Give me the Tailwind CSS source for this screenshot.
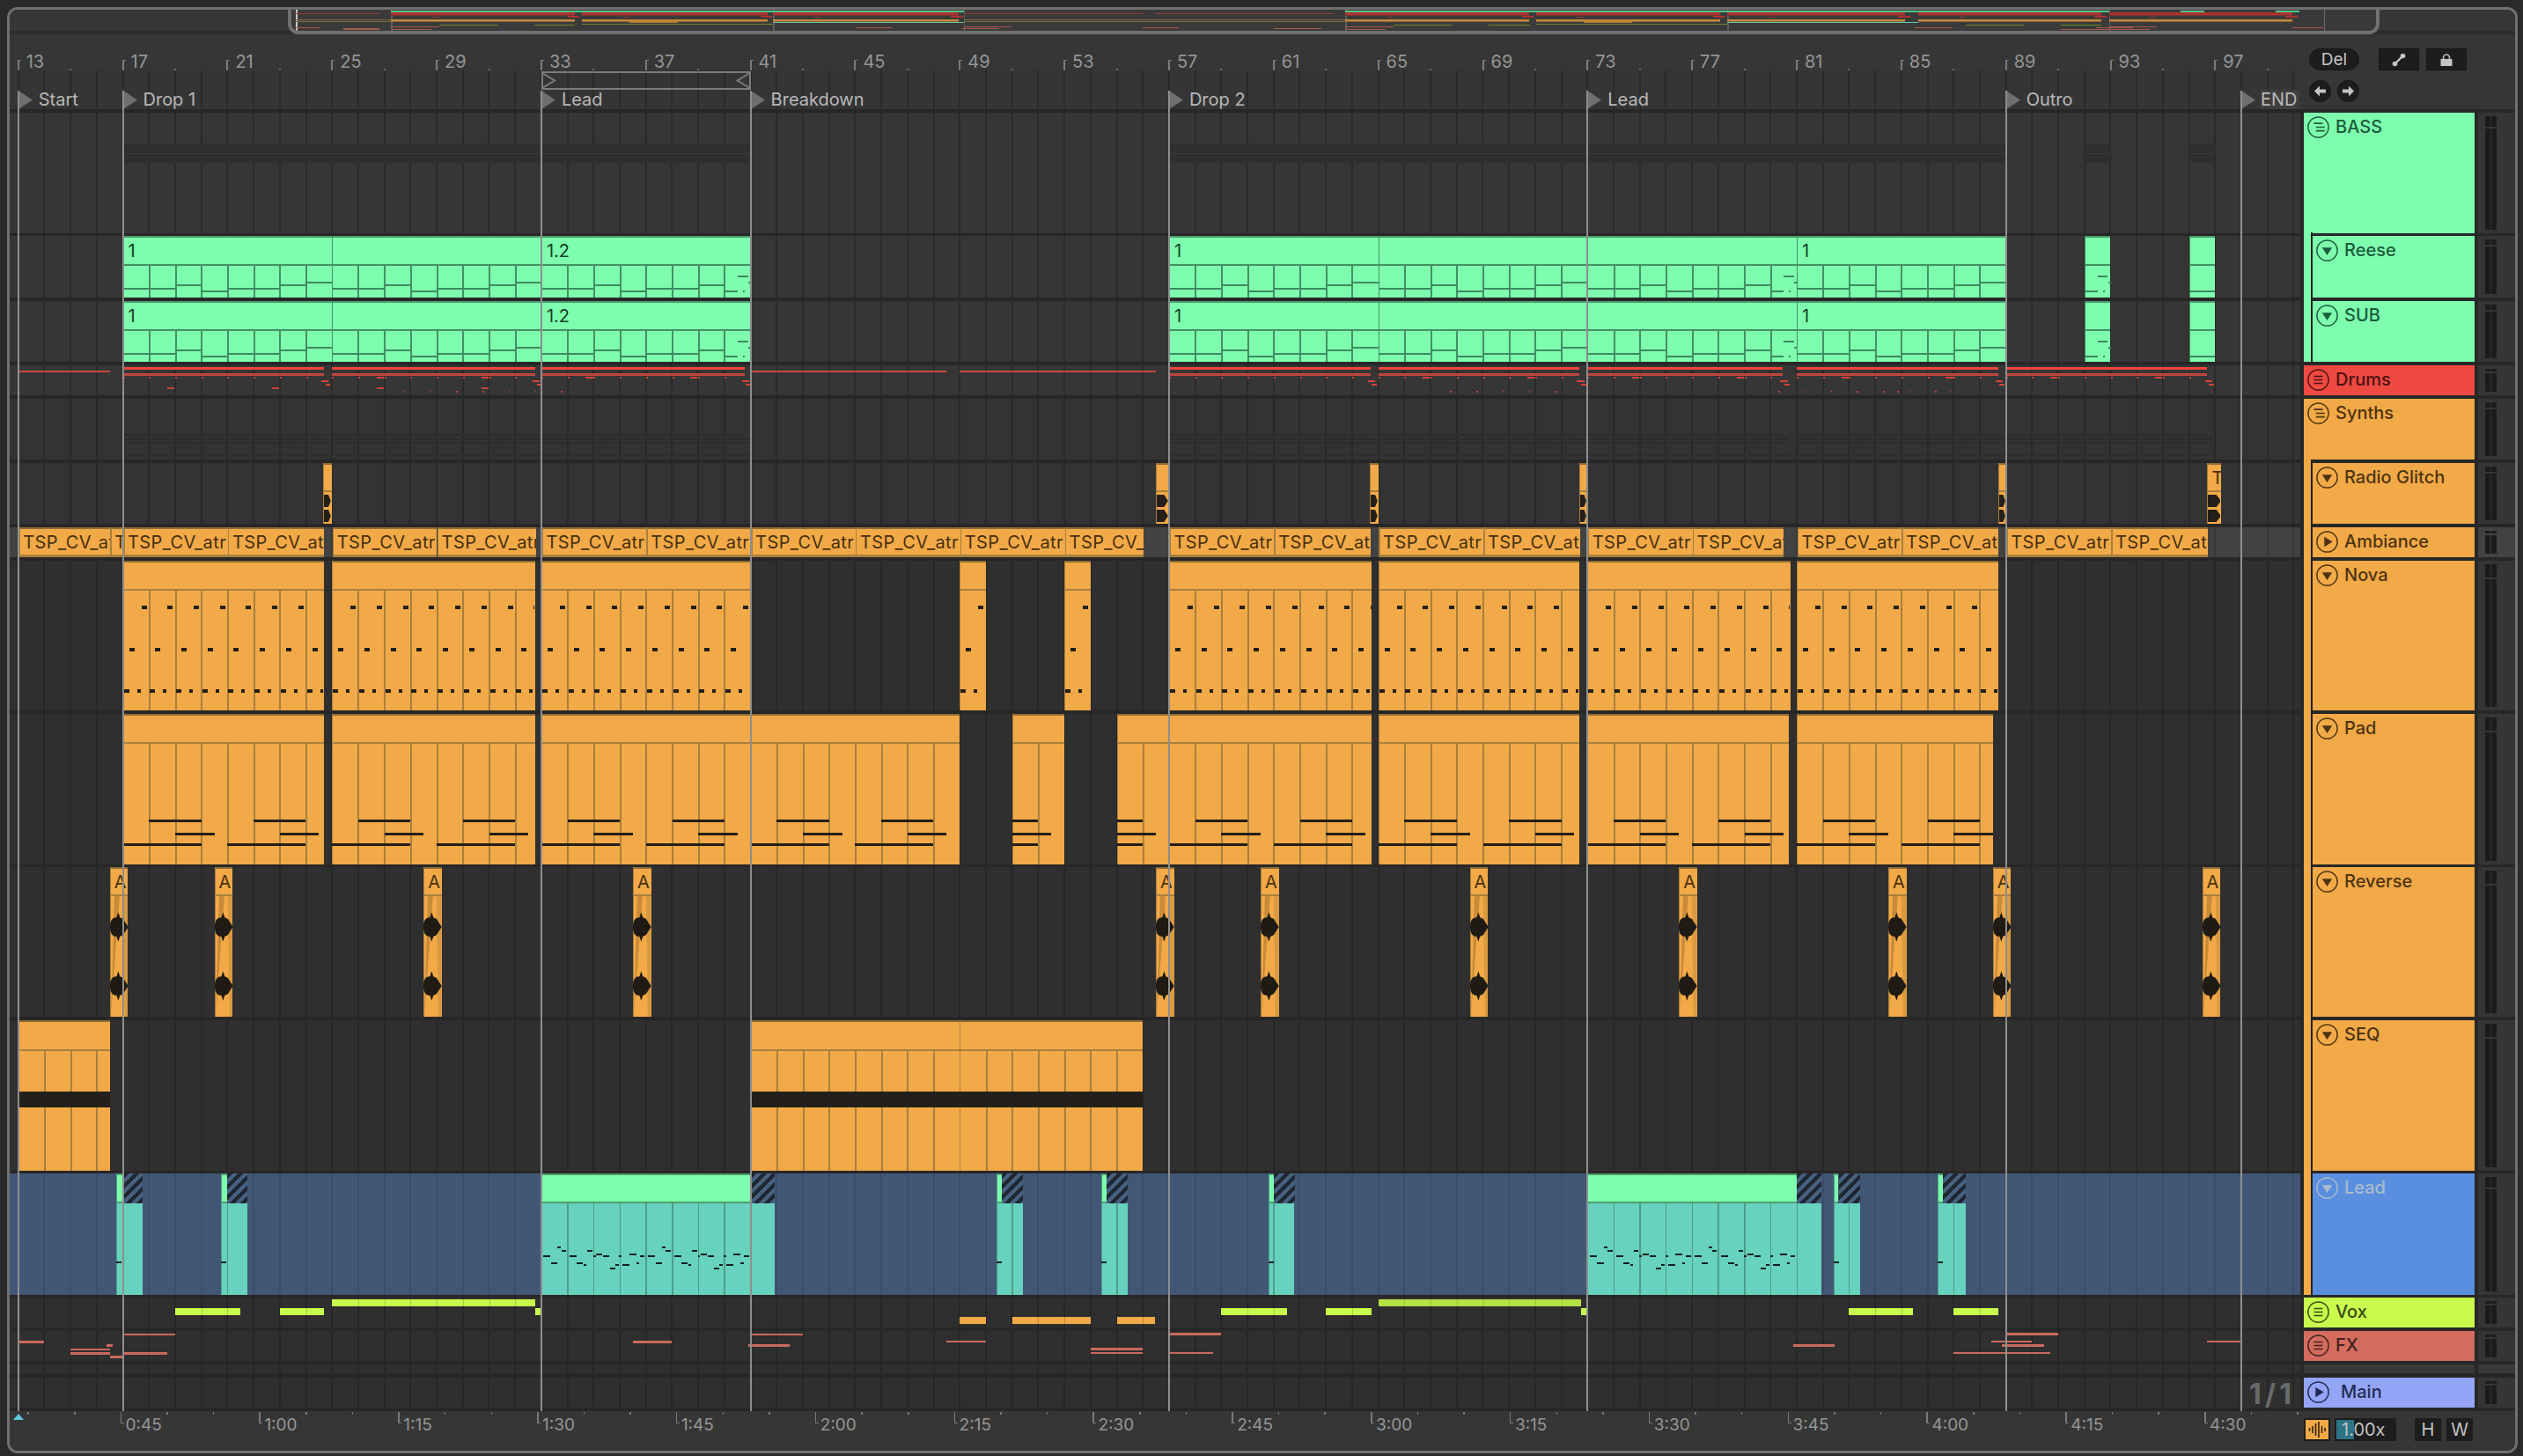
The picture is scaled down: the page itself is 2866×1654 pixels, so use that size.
<!DOCTYPE html>
<html lang="en">
<head>
<meta charset="utf-8">
<title>Arrangement</title>
<script src="https://cdn.jsdelivr.net/npm/@tailwindcss/browser@4"></script>
</head>
<body class="bg-[#2a2a2a] overflow-hidden">
<div class="w-[2866px] h-[1654px] pl-[8px] pr-[6px] pt-[8px] pb-[3px]">
  <div id="frame" class="relative w-full h-full border-[3px] border-[#707070] rounded-[12px] bg-[#272727] overflow-hidden flex flex-col [font-family:Inter,sans-serif]">

    <!-- overview strip -->
    <div class="relative h-[28px] shrink-0 bg-[#363636] border-b-4 border-[#2d2d2d]"></div>
    <div id="overview" class="absolute left-[316px] top-0 w-[2376px] h-[28px] z-10 bg-[#3a3a3a] border-x-4 border-b-4 border-[#707070] rounded-b-[12px] overflow-hidden"></div>

    <!-- rulers and locators -->
    <div class="flex h-[85px] shrink-0 bg-[#363636]">
      <div class="w-[2602px] flex flex-col">
        <div id="bars" class="relative h-[41px]"></div>
        <div id="locators" class="relative h-[44px] bg-[#353535] bg-[repeating-linear-gradient(90deg,transparent_0,transparent_8.7px,#2a2a2a_8.7px,#2a2a2a_10.7px,transparent_10.7px,transparent_29.71px)]"></div>
      </div>
      <div class="w-[4px]"></div>
      <div class="flex-1 pl-[6px] pt-[16px] text-[#c4c4c4]">
        <div class="flex items-center h-[25px]">
          <div class="w-[57px] h-[25px] rounded-full bg-[#1d1d1d] border border-[#161616] flex items-center justify-center text-[19px] leading-none">Del</div>
          <div class="ml-[22px] w-[46px] h-[25px] bg-[#1d1d1d] border border-[#161616] flex items-center justify-center">
            <svg class="w-[16px] h-[16px]" viewBox="0 0 16 16"><path d="M3.5 12.5 L12.5 3.5" stroke="#c4c4c4" stroke-width="2.4"/><circle cx="3.5" cy="12.5" r="2.8" fill="#c4c4c4"/><circle cx="12.5" cy="3.5" r="2.8" fill="#c4c4c4"/></svg>
          </div>
          <div class="ml-[8px] w-[46px] h-[25px] bg-[#1d1d1d] border border-[#161616] flex items-center justify-center">
            <svg class="w-[16px] h-[16px]" viewBox="0 0 16 16"><path d="M4.5 7.5 V5.5 a3.5 3.5 0 0 1 7 0 V7.5" fill="none" stroke="#c4c4c4" stroke-width="1.6"/><rect x="1.5" y="7" width="13" height="8" fill="#c4c4c4"/></svg>
          </div>
        </div>
        <div class="flex mt-[11px] gap-[7px]">
          <div class="w-[25px] h-[25px] rounded-full bg-[#1d1d1d] border border-[#161616] flex items-center justify-center">
            <svg class="w-[15px] h-[13px]" viewBox="0 0 15 13"><path d="M7 0.5 L1 6.5 L7 12.5 L7 8.5 L14 8.5 L14 4.5 L7 4.5 Z" fill="#c4c4c4"/></svg>
          </div>
          <div class="w-[25px] h-[25px] rounded-full bg-[#1d1d1d] border border-[#161616] flex items-center justify-center">
            <svg class="w-[15px] h-[13px]" viewBox="0 0 15 13"><path d="M8 0.5 L14 6.5 L8 12.5 L8 8.5 L1 8.5 L1 4.5 L8 4.5 Z" fill="#c4c4c4"/></svg>
          </div>
        </div>
      </div>
    </div>

    <!-- tracks -->
    <div id="rows" class="flex flex-col shrink-0"></div>

    <!-- time ruler and bottom controls -->
    <div class="mt-[4px] flex-1 flex bg-[#363636]">
      <div id="times" class="relative w-[2602px] h-full"></div>
      <div class="w-[4px]"></div>
      <div class="flex-1 flex items-start pt-[8px] text-[#c4c4c4]">
        <div class="w-[30px] h-[26px] bg-[#f2a947] border-2 border-[#1d1d1d] flex items-center justify-center">
          <svg class="w-[20px] h-[18px]" viewBox="0 0 20 18"><path d="M1.5 7v4M5 5v8M8.5 2v14M12 0v18M15.5 5v8M19 7v4" stroke="#33230b" stroke-width="1.6"/></svg>
        </div>
        <div class="relative ml-[5px] w-[70px] h-[26px] bg-[#1d1d1d] flex items-center pl-[8px] text-[20px] leading-none">
          <div class="absolute left-[2px] top-[2px] bottom-[2px] w-[20px] bg-[#2c7486]"></div>
          <span class="relative">1.00x</span>
        </div>
        <div class="ml-[21px] w-[30px] h-[26px] bg-[#1d1d1d] flex items-center justify-center text-[20px] leading-none">H</div>
        <div class="ml-[6px] w-[30px] h-[26px] bg-[#1d1d1d] flex items-center justify-center text-[20px] leading-none">W</div>
      </div>
    </div>

    <div id="sections" class="absolute inset-0 pointer-events-none"></div>
  </div>
</div>

<script>
const X = b => 9.7 + 29.71 * (b - 13);
const OX = b => 336 + 27.1 * (b - 13) - 331;
const box = (l, t, w, h, cls, inner = '') =>
  `<div class="absolute ${cls}" style="left:${l.toFixed(1)}px;top:${t.toFixed(1)}px;width:${w.toFixed(1)}px;height:${h}px">${inner}</div>`;

const LIGHT = 'bg-[#363636] bg-[repeating-linear-gradient(90deg,transparent_0,transparent_8.7px,#2a2a2a_8.7px,#2a2a2a_10.7px,transparent_10.7px,transparent_29.71px)]';
const MID = 'bg-[#333333] bg-[repeating-linear-gradient(90deg,transparent_0,transparent_8.7px,#282828_8.7px,#282828_10.7px,transparent_10.7px,transparent_29.71px)]';
const DARK = 'bg-[#2f2f2f] bg-[repeating-linear-gradient(90deg,transparent_0,transparent_8.7px,#262626_8.7px,#262626_10.7px,transparent_10.7px,transparent_29.71px)]';
const BLUE = 'bg-[#415775] bg-[repeating-linear-gradient(90deg,transparent_0,transparent_8.7px,#3a4e6b_8.7px,#3a4e6b_10.7px,transparent_10.7px,transparent_29.71px)]';
const SEL = 'bg-[#424242] bg-[repeating-linear-gradient(90deg,transparent_0,transparent_8.7px,#383838_8.7px,#383838_10.7px,transparent_10.7px,transparent_29.71px)]';

const C = {
  green: { bg: 'bg-[#7dfdad]', text: 'text-[#1c5c3c]', strip: 'bg-[#7dfdad]' },
  red: { bg: 'bg-[#ee4a42]', text: 'text-[#4d1210]' },
  orange: { bg: 'bg-[#f2a947]', text: 'text-[#4d3410]', strip: 'bg-[#f2a947]' },
  blue: { bg: 'bg-[#5a8fe0]', text: 'text-[#a9bccb]' },
  lime: { bg: 'bg-[#c8fb4d]', text: 'text-[#3a4a10]' },
  salmon: { bg: 'bg-[#d36c5e]', text: 'text-[#43201b]' },
  main: { bg: 'bg-[#94a5f7]', text: 'text-[#222b52]' }
};

const defs = [
  { id: 'bass', name: 'BASS', h: 137, mt: 4, grid: LIGHT, c: C.green, icon: 'group', meter: LIGHT },
  { id: 'reese', name: 'Reese', h: 70, mt: 3, grid: LIGHT, c: C.green, icon: 'down', parent: C.green },
  { id: 'sub', name: 'SUB', h: 69, mt: 4, grid: LIGHT, c: C.green, icon: 'down', parent: C.green },
  { id: 'drums', name: 'Drums', h: 34, mt: 4, grid: LIGHT, c: C.red, icon: 'list' },
  { id: 'synths', name: 'Synths', h: 69, mt: 4, grid: MID, c: C.orange, icon: 'group' },
  { id: 'radio', name: 'Radio Glitch', h: 69, mt: 4, grid: MID, c: C.orange, icon: 'down', parent: C.orange },
  { id: 'amb', name: 'Ambiance', h: 34, mt: 4, grid: SEL, c: C.orange, icon: 'right', parent: C.orange },
  { id: 'nova', name: 'Nova', h: 170, mt: 4, grid: DARK, c: C.orange, icon: 'down', parent: C.orange },
  { id: 'pad', name: 'Pad', h: 171, mt: 4, grid: DARK, c: C.orange, icon: 'down', parent: C.orange },
  { id: 'rev', name: 'Reverse', h: 170, mt: 3, grid: DARK, c: C.orange, icon: 'down', parent: C.orange },
  { id: 'seq', name: 'SEQ', h: 171, mt: 4, grid: DARK, c: C.orange, icon: 'down', parent: C.orange },
  { id: 'lead', name: 'Lead', h: 138, mt: 3, grid: BLUE, c: C.blue, icon: 'down', parent: C.orange },
  { id: 'vox', name: 'Vox', h: 34, mt: 3, grid: DARK, c: C.lime, icon: 'list' },
  { id: 'fx', name: 'FX', h: 34, mt: 4, grid: DARK, c: C.salmon, icon: 'list' },
  { id: 'ret', name: '', h: 10, mt: 4, grid: DARK, c: null },
  { id: 'main', name: 'Main', h: 34, mt: 5, grid: DARK, c: C.main, icon: 'right' }
];
const R = {};
let yy = 124;
for (const d of defs) { yy += d.mt; d.top = yy; d.html = ''; R[d.id] = d; yy += d.h; }

const rect = (id, x0, x1, y, h, cls, inner = '') => { R[id].html += box(x0, y - R[id].top, x1 - x0, h, cls, inner); };
const bars = (id, b0, b1, y, h, cls) => rect(id, X(b0), X(b1), y, h, cls);

function icon(type) {
  const glyph = {
    group: '<path d="M7.5 8.2H17.5M9.8 12.5H19.8M9.8 16.6H19.8" stroke="currentColor" stroke-width="1.7" fill="none"/>',
    list: '<path d="M7.5 8.5H17.5M7.5 12.5H17.5M7.5 16.5H17.5" stroke="currentColor" stroke-width="1.7" fill="none"/>',
    down: '<polygon points="6.8,9.3 18.2,9.3 12.5,18" fill="currentColor"/>',
    right: '<polygon points="9.3,6.8 18.7,12.5 9.3,18.2" fill="currentColor"/>'
  }[type];
  return `<svg class="w-[25px] h-[25px] shrink-0" viewBox="0 0 25 25"><circle cx="12.5" cy="12.5" r="11.6" fill="none" stroke="currentColor" stroke-width="1.5"/>${glyph}</svg>`;
}

/* generic clip: title bar, bar lines in the body, optional label */
const ORANGE = { bg: 'bg-[#f2a947]', strip: 'bg-[#8f6c36]', line: 'bg-[#a97f3e]', text: 'text-[#47300f]' };
const GREEN = { bg: 'bg-[#7dfdad]', strip: 'bg-[#4d9d6d]', line: 'bg-[#459064]', text: 'text-[#163f2a]' };
function clip(id, b0, b1, t, o = {}) {
  const r = R[id], th = o.th ?? 32, x0 = X(b0), x1 = X(b1);
  rect(id, x0, x1, r.top, r.h, t.bg);
  rect(id, x0, x1, r.top, 2, t.strip);
  if (th < r.h) rect(id, x0, x1, r.top + th, 2, t.line);
  rect(id, x0, x0 + 1, r.top, r.h, t.line);
  if (!o.nolines) for (let b = Math.ceil(b0 + 0.01); b < b1 - 0.01; b++) rect(id, X(b) - 0.5, X(b) + 1.5, r.top + th, r.h - th, t.line);
  if (o.label) rect(id, x0 + (o.lx ?? 5), x1, r.top + 1, Math.min(th, r.h) - 1,
    `overflow-hidden whitespace-nowrap text-[20px] leading-[32px] ${t.text}`, o.label);
}

/* ===== Bass group ===== */
[[17, 41], [57, 89], [92, 93], [96, 97]].forEach(([a, b]) => {
  bars('bass', a, b, 163, 22, 'bg-[#2f2f2f]');
  bars('bass', a, b, 174, 1, 'bg-[#3a3a3a]');
});
const bassPat = [60, 60, 56, 63, 60, 60, 56, 53];
for (const id of ['reese', 'sub']) {
  const top = R[id].top;
  const segs = [[17, 25, '1'], [25, 33, ''], [33, 41, '1.2'], [57, 65, '1'], [65, 73, ''], [73, 81, ''], [81, 89, '1'], [92, 93, ''], [96, 97, '']];
  for (const [a, b, label] of segs) {
    clip(id, a, b, GREEN, { label, lx: 6 });
    for (let k = a; k < b; k++) {
      const v = (a === 33 || a === 73) && k === b - 1;
      if (v || a === 92) {
        bars(id, k + 0.5, k + 0.9, top + 45, 1.5, 'bg-[#3b8a60]');
        bars(id, k + 0.9, k + 1, top + 52, 2, 'bg-[#3b8a60]');
        bars(id, k, k + 0.5, top + 62, 2, 'bg-[#3b8a60]');
        bars(id, k + 0.7, k + 0.78, top + 62, 2, 'bg-[#3b8a60]');
      } else if (a === 96) {
        bars(id, k, k + 1, top + 62, 2, 'bg-[#3b8a60]');
      } else {
        bars(id, k, k + 1, top + bassPat[(k - a) % 8] - 1, 2, 'bg-[#3b8a60]');
      }
    }
  }
}

/* ===== Drums ===== */
const secs = [[17, 24.69], [25, 32.77], [33, 40.77], [57, 64.7], [65, 72.7], [73, 80.47], [81, 88.7], [89, 96.7]];
secs.forEach(([s, e]) => {
  bars('drums', s, e, 416.5, 3, 'bg-[#ec453b]');
  bars('drums', s, e, 424, 3, 'bg-[#bd4740]');
  for (let i = 0; i < 8; i++) bars('drums', s + i, s + i + 0.07, 428, 2, 'bg-[#d5433a]');
  if (s !== 17 && s !== 57) {
    bars('drums', s + 1.7, s + 1.98, 428, 2, 'bg-[#d5433a]');
    bars('drums', s + 5.7, s + 5.98, 428, 2, 'bg-[#d5433a]');
  }
  bars('drums', e - 0.1, e + 0.18, 432, 2, 'bg-[#d5433a]');
  bars('drums', e + 0.05, e + 0.25, 436, 2, 'bg-[#d5433a]');
});
[[13, 16.5], [41, 48.5], [49, 56.5]].forEach(([a, b]) => bars('drums', a, b, 420.5, 2.5, 'bg-[#c9463e]'));
[18.7, 22.7, 26.7, 30.7].forEach(b => bars('drums', b, b + 0.28, 439.5, 2, 'bg-[#c4453d]'));
[27.75, 28.75, 29.75, 30.75, 31.75, 32.75, 33.75, 67.75, 68.75, 69.75, 70.75, 71.75, 80.3, 81.3, 82.3, 83.3, 84.3, 84.85, 85.3, 86.3, 86.85, 96.85].forEach(b =>
  bars('drums', b, b + 0.05, 443.5, 2, 'bg-[#c4453d]'));

/* ===== Synths (collapsed group, faint) ===== */
secs.forEach(([s, e]) => {
  bars('synths', s, e, 493, 2, 'bg-[#2c2c2c]');
  bars('synths', s, e + 0.2, 498, 2, 'bg-[#2c2c2c]');
  bars('synths', s, e + 0.2, 502, 2, 'bg-[#2c2c2c]');
  bars('synths', s + 2, s + 2.7, 507, 2, 'bg-[#2d2d2d]');
  bars('synths', s + 6, s + 6.7, 507, 2, 'bg-[#2d2d2d]');
  bars('synths', s, e + 0.3, 516, 2, 'bg-[#2e2e2e]');
});

/* ===== Radio Glitch ===== */
[[24.67, 25, ''], [56.5, 57, ''], [64.67, 65, ''], [72.7, 73, ''], [88.7, 89, ''], [96.67, 97.24, 'T']].forEach(([a, b, l]) => {
  clip('radio', a, b, ORANGE, { label: l, lx: 6, th: 31, nolines: true });
  const w = X(b) - X(a) - 2;
  const svg = () => `<svg class="w-full h-full" preserveAspectRatio="none" viewBox="0 0 20 14"><polygon points="0,0 13,0 20,7 13,14 0,14" fill="#241f18"/></svg>`;
  rect('radio', X(a) + 1, X(a) + 1 + w, 562, 14, '', svg());
  rect('radio', X(a) + 1, X(a) + 1 + w, 579, 14, '', svg());
});

/* ===== Ambiance ===== */
[[13, 16.5], [16.5, 17], [17, 21], [21, 24.69], [25, 29], [29, 32.77], [33, 37], [37, 41],
 [41, 45], [45, 49], [49, 53], [53, 56], [57, 61], [61, 64.7], [65, 69], [69, 72.7],
 [73, 77], [77, 80.47], [81, 85], [85, 88.7], [89, 93], [93, 96.7]].forEach(([a, b]) => {
  const r = R.amb, x0 = X(a) + 0.5, x1 = X(b) + 0.5;
  rect('amb', x0, x1, r.top, r.h, 'bg-[#f2a947]');
  rect('amb', x0, x1, r.top, 2, 'bg-[#8f6c36]');
  rect('amb', x0, x1, r.top + 31, 3, 'bg-[#a97f3e]');
  rect('amb', x0, x0 + 1.5, r.top, r.h, 'bg-[#a97f3e]');
  rect('amb', x0 + 5, x1, r.top + 1, 31, 'overflow-hidden whitespace-nowrap text-[20px] tracking-[0.4px] leading-[32px] text-[#47300f]', 'TSP_CV_atr');
});

/* ===== Nova ===== */
[[17, 24.69], [25, 32.77], [33, 41], [49, 50], [53, 54], [57, 64.75], [65, 72.7], [73, 80.75], [81, 88.7]].forEach(([a, b]) => {
  clip('nova', a, b, ORANGE);
  const pad = (x0, w, y) => {
    const l = Math.max(x0, X(a)), r = Math.min(x0 + w, X(b) - 1);
    if (r > l) rect('nova', l, r, y, 4, 'bg-[#231f1a]');
  };
  for (let k = Math.floor(a); k < b; k++) {
    pad(X(k) + 21, 6, 688);
    pad(X(k) + 7, 6, 736);
    pad(X(k) + 1, 6, 783);
    pad(X(k) + 16, 4, 783);
  }
});

/* ===== Pad ===== */
[[17, 24.69], [25, 32.77], [33, 49], [51, 53], [55, 64.75], [65, 72.7], [73, 80.7], [81, 88.5]].forEach(([a, b]) => {
  clip('pad', a, b, ORANGE);
  const n = (p, q, y) => { const l = Math.max(p, a), r = Math.min(q, b); if (r > l) bars('pad', l, r, y, 3, 'bg-[#231f1a]'); };
  for (let k = 1; k < 97; k += 4) {
    n(k + 1, k + 3, 930.5);
    n(k + 2, k + 3.5, 945.5);
    n(k, k + 3, 957.5);
  }
});

/* ===== Reverse ===== */
const blob1 = '<path d="M0 17 C0 9 3 6 7.5 6 L9.5 0 L11.5 6 L15 7.5 L21 17 L15 26.5 L11.5 28 L9.5 34 L7.5 28 C3 28 0 25 0 17Z" fill="#1f1a14"/>';
[16.5, 20.5, 28.5, 36.5, 56.5, 60.5, 68.5, 76.5, 84.5, 88.5, 96.5].forEach(b => {
  const x0 = X(b), x1 = x0 + 20.7;
  clip('rev', b, b + 0.697, ORANGE, { label: 'A', lx: 5, th: 31, nolines: true });
  const t = R.rev.top;
  rect('rev', x0 + 1, x1, t + 33, 137, '', `<svg class="w-full h-full" preserveAspectRatio="none" viewBox="0 0 20 137"><polygon points="10,0 4,0 0,137" fill="#c98b3a"/><polygon points="14,0 20,0 20,137 16,137" fill="#d99a40"/></svg>`);
  rect('rev', x0, x1, 1036, 34, '', `<svg class="w-full h-full" viewBox="0 0 21 34">${blob1}</svg>`);
  rect('rev', x0, x1, 1103, 34, '', `<svg class="w-full h-full" viewBox="0 0 21 34">${blob1}</svg>`);
});

/* ===== SEQ ===== */
[[13, 16.5], [41, 49], [49, 56]].forEach(([a, b]) => {
  clip('seq', a, b, ORANGE, { th: 33 });
  bars('seq', a, b, 1240, 18, 'bg-[#231f1a]');
});

/* ===== Lead ===== */
const HATCH = 'bg-[repeating-linear-gradient(135deg,#1f2733_0,#1f2733_4.3px,#47607f_4.3px,#47607f_8.5px)]';
const base = [[172,317,25],[220,287,12],[233,299,17],[198,341,22],[262,317,24],[286,341,22],[310,347,10],[322,299,17],[342,317,8],[352,311,22],[376,317,22],[398,359,18],[416,347,12],[430,317,10],[440,347,24],[464,311,24],[488,341,10],[500,317,17]];
[[16.75, 17, 17.77], [20.75, 21, 21.77], [33, 41, 41.93], [50.4, 50.6, 51.43], [54.4, 54.6, 55.43], [60.8, 61, 61.8], [73, 81, 81.95], [82.4, 82.6, 83.43], [86.4, 86.6, 87.45]].forEach(([a, g, e]) => {
  const t = R.lead.top, x0 = X(a), gx = X(g), x1 = X(e);
  rect('lead', x0, x1, t + 34, 104, 'bg-[#67d2bd]');
  rect('lead', x0, gx, t, 33, 'bg-[#7dfdad]');
  rect('lead', x0, gx, t, 2, 'bg-[#4d9d6d]');
  rect('lead', x0, gx, t + 32, 2, 'bg-[#4d9d6d]');
  rect('lead', gx, x1, t, 34, HATCH);
  rect('lead', x0, x0 + 1, t, 138, 'bg-[#4f9c8d]');
  for (let b = Math.ceil(a + 0.01); b < e - 0.01; b++) rect('lead', X(b) - 0.5, X(b) + 1, t + 34, 104, 'bg-[#4f9c8d]');
  if (e - a > 2) {
    for (const off of [0, 118.84]) for (const [nx, ny, nw] of base)
      rect('lead', x0 + off + (nx - 165) / 3, x0 + off + (nx - 165) / 3 + nw / 3, ny / 3 + 1320, 2, 'bg-[#14211f]');
  } else {
    rect('lead', x0, x0 + 6, 1433, 2, 'bg-[#14211f]');
  }
});

/* ===== Vox ===== */
const lime = (a, b, y, cls, div) => {
  bars('vox', a, b, y, 8, cls);
  for (let k = Math.ceil(a + 0.01); k < b; k++) bars('vox', k, k + 0.03, y, 8, div);
};
[[19, 21.5], [23, 24.7], [32.77, 33], [59, 61.5], [63, 64.75], [72.75, 73], [83, 85.45], [87, 88.7]].forEach(([a, b]) => lime(a, b, 1486, 'bg-[#c8fb4d]', 'bg-[#a5cf40]'));
[[25, 32.78]].forEach(([a, b]) => lime(a, b, 1476, 'bg-[#c8fb4d]', 'bg-[#a5cf40]'));
[[65, 72.75]].forEach(([a, b]) => lime(a, b, 1476, 'bg-[#b5e244]', 'bg-[#9cc23c]'));
[[49, 50], [51, 54], [55, 56.45]].forEach(([a, b]) => lime(a, b, 1496, 'bg-[#f2a947]', 'bg-[#c58a3c]'));

/* ===== FX ===== */
[[13, 14, 1523], [15, 16.5, 1531.5], [15, 16.5, 1536], [16.36, 16.6, 1527], [16.5, 17, 1540], [17, 19, 1514.5], [17, 18.7, 1536], [36.5, 38, 1523], [41, 43, 1514.5], [40.9, 42.5, 1527],
 [48.5, 50, 1522.5], [54, 56, 1531], [54, 56, 1535.5], [57, 59, 1514], [57, 58.7, 1535.5], [80.85, 82.45, 1527], [89, 91, 1514], [88.45, 90, 1522.5], [88.85, 90.45, 1527], [87, 90.7, 1535.5], [96.7, 98, 1522.5]]
  .forEach(([a, b, y]) => bars('fx', a, b, y, 2.5, 'bg-[#c96a5c]'));

/* ===== Main: view counter ===== */
R.main.html += '<div class="absolute right-[6px] top-[1px] text-[32px] leading-[36px] font-bold tracking-[4px] text-[#6a6a6a]">1/1</div>';

/* ===== Row markup ===== */
function header(d) {
  if (!d.c) return '<div class="w-[194px] h-full bg-[#393939]"></div>';
  const gap = d.id === 'main' ? 'gap-[13px]' : 'gap-[7px]';
  const inner = `<div class="flex-1 min-w-0 h-full ${d.c.bg} ${d.c.text} flex items-start pt-[4px] pl-[4px] ${gap} relative">${icon(d.icon)}<span class="text-[20px] leading-[25px] font-medium whitespace-nowrap">${d.name}</span></div>`;
  if (!d.parent) return `<div class="w-[194px] h-full flex">${inner}</div>`;
  return `<div class="relative w-[194px] h-full flex pl-[10px]">
    <div class="absolute left-0 w-[8px] -top-[4px] bottom-0 ${d.parent.bg}"></div>
    <div class="absolute left-[8px] w-[2px] -top-[4px] bottom-0 bg-[#222222]"></div>${inner}</div>`;
}
function meter(d) {
  const sel = d.id === 'amb' ? 'bg-[#424242]' : 'bg-[#353535]';
  const tp = Math.max(2, Math.round(d.h * 0.09));
  if (d.id === 'ret') return `<div class="flex-1 h-full bg-[#393939]"></div>`;
  const bar = `<div class="w-[6px] h-full flex flex-col gap-[2px]"><div class="bg-[#1b1b1b] shrink-0" style="height:${tp}px"></div><div class="bg-[#1b1b1b] flex-1"></div></div>`;
  return `<div class="flex-1 h-full ${sel} flex gap-[1px] pl-[8px] py-[4px]">${bar}${bar}</div>`;
}
document.getElementById('rows').innerHTML = defs.map(d =>
  `<div class="flex shrink-0" style="height:${d.h}px;margin-top:${d.mt}px">
     <div class="relative w-[2602px] h-full overflow-hidden ${d.grid}">${d.html}</div>
     <div class="w-[4px]"></div>${header(d)}<div class="w-[4px]"></div>${meter(d)}
   </div>`).join('');

/* ===== Bar ruler ===== */
let rul = '';
for (let b = 13; b <= 97; b += 4) {
  rul += box(X(b) - 1, 29, 2, 12, 'bg-[#7a7a7a]');
  rul += box(X(b) - 1, 29, 4, 1, 'bg-[#7a7a7a]');
  rul += box(X(b) + 9, 19, 40, 28, 'text-[20px] leading-[24px] text-[#959595]', String(b));
  rul += box(X(b + 2) - 1, 39, 2, 2, 'bg-[#6a6a6a]');
}
document.getElementById('bars').innerHTML = rul;

/* ===== Locators and loop brace ===== */
const tri = '<svg class="w-full h-full" viewBox="0 0 16 21"><polygon points="0,0 16,10.5 0,21" fill="#6f6f6f"/></svg>';
let loc = '';
[[13, 'Start'], [17, 'Drop 1'], [33, 'Lead'], [41, 'Breakdown'], [57, 'Drop 2'], [73, 'Lead'], [89, 'Outro'], [98, 'END']].forEach(([b, t]) => {
  loc += box(X(b), 23, 16, 21, '', tri);
  const end = t === 'END';
  loc += box(X(b) + (end ? 22 : 23), 22, end ? 44 : 160, 22,
    'text-[20px] leading-[22px] text-[#b8b8b8] whitespace-nowrap' + (end ? ' bg-[#3e3e3e]' : ''), t);
});
const lx0 = X(33), lw = X(41) - X(33);
loc += box(lx0, 1, lw, 21, 'border-2 border-[#7c7c7c]');
loc += box(lx0, 1, lw, 21, '', `<svg class="w-full h-full" viewBox="0 0 ${lw} 21"><path d="M1 2 L15 10.5 L1 19" fill="none" stroke="#7c7c7c" stroke-width="2"/><path d="M${lw - 1} 2 L${lw - 15} 10.5 L${lw - 1} 19" fill="none" stroke="#7c7c7c" stroke-width="2"/></svg>`);
document.getElementById('locators').innerHTML = loc;

/* ===== Time ruler ===== */
let tm = '';
const T = n => 125.6 + 157.83 * n;
const lab = ['0:45','1:00','1:15','1:30','1:45','2:00','2:15','2:30','2:45','3:00','3:15','3:30','3:45','4:00','4:15','4:30'];
lab.forEach((t, n) => {
  tm += box(T(n), 1, 1.5, 13, 'bg-[#7a7a7a]');
  tm += box(T(n), 13, 4, 1, 'bg-[#7a7a7a]');
  tm += box(T(n) + 6, 3, 60, 28, 'text-[19px] leading-[26px] text-[#959595]', t);
  tm += box(T(n) + 52.6, 1, 1.5, 3, 'bg-[#7a7a7a]');
  tm += box(T(n) + 105.2, 1, 1.5, 3, 'bg-[#7a7a7a]');
});
tm += box(T(0) - 52.6, 1, 1.5, 3, 'bg-[#7a7a7a]');
tm += box(T(0) - 105.2, 1, 1.5, 3, 'bg-[#7a7a7a]');
tm += box(3.7, 3, 12, 7, '', '<svg class="w-full h-full" viewBox="0 0 12 7"><polygon points="0,7 12,7 6,0" fill="#5ec6de"/></svg>');
document.getElementById('times').innerHTML = tm;

/* ===== Section lines over everything ===== */
document.getElementById('sections').innerHTML = [13, 17, 33, 41, 57, 73, 89, 98].map(b =>
  box(X(b) - 1, 92, 2, 1500, 'bg-[#8e8e8e] z-20')).join('');

/* ===== Overview ===== */
let ov = '';
const o = (a, b, y, h, cls) => { ov += box(OX(a), y - 11, OX(b) - OX(a), h, cls); };
[[13, 'bg-[#c8c8c8]'], [17, 'bg-[#5d5d5d]'], [33, 'bg-[#5d5d5d]'], [41, 'bg-[#5d5d5d]'], [57, 'bg-[#5d5d5d]'], [73, 'bg-[#5d5d5d]'], [89, 'bg-[#5d5d5d]'], [98, 'bg-[#707070]']].forEach(([b, c]) => { ov += box(OX(b), 0, 1.5, 24, c); });
[[17, 41], [57, 89]].forEach(([a, b]) => { o(a, b, 12, 1.5, 'bg-[#55c48b]'); });
[[92, 93], [96, 97]].forEach(([a, b]) => { o(a, b, 12, 1.5, 'bg-[#55c48b]'); });
secs.forEach(([a, b]) => {
  o(a, b, 14, 2.5, 'bg-[#a83430]');
  o(a, b, 17, 1, 'bg-[#7a3432]');
  o(b - 0.3, b + 0.2, 18, 2, 'bg-[#a83430]');
  o(a + 1.7, a + 2, 19, 1, 'bg-[#8f3a36]');
  o(a, b, 22, 2.5, 'bg-[#c4883a]');
  o(a, b, 24, 1, 'bg-[#8c6a39]');
});
[[13, 16.5], [41, 48.5], [49, 56.5]].forEach(([a, b]) => { o(a, b, 14.5, 1, 'bg-[#943a36]'); });
[[13, 17], [41, 57]].forEach(([a, b]) => { o(a, b, 21.5, 1, 'bg-[#7d6a3f]'); o(a, b, 24, 1, 'bg-[#7d6a3f]'); });
[[33, 41], [73, 81]].forEach(([a, b]) => { o(a, b, 25, 1, 'bg-[#5fc7a6]'); });
[[19, 21.5], [23, 24.7], [59, 61.5], [63, 64.75], [83, 85.45], [87, 88.7]].forEach(([a, b]) => { o(a, b, 27.5, 1.5, 'bg-[#6f8a2f]'); });
[[25, 33], [65, 73]].forEach(([a, b]) => { o(a, b, 26.5, 1.5, 'bg-[#6f8a2f]'); });
[[27, 29], [67, 69]].forEach(([a, b]) => { o(a, b, 24, 2, 'bg-[#b57f35]'); });
[[13, 14, 31], [15, 16.5, 32], [15, 16.5, 33], [17, 19, 29.5], [17, 18.7, 33], [36.5, 38, 31], [41, 43, 29.5], [40.9, 42.5, 32], [48.5, 50, 31], [54, 56, 32], [57, 59, 29.5], [57, 58.7, 33], [80.85, 82.45, 31], [89, 91, 29.5], [88.45, 90, 31], [87, 90.7, 33], [96.7, 98, 31]]
  .forEach(([a, b, y]) => { o(a, b, y, 1, 'bg-[#a65a50]'); });
document.getElementById('overview').innerHTML = ov;
</script>
</body>
</html>
